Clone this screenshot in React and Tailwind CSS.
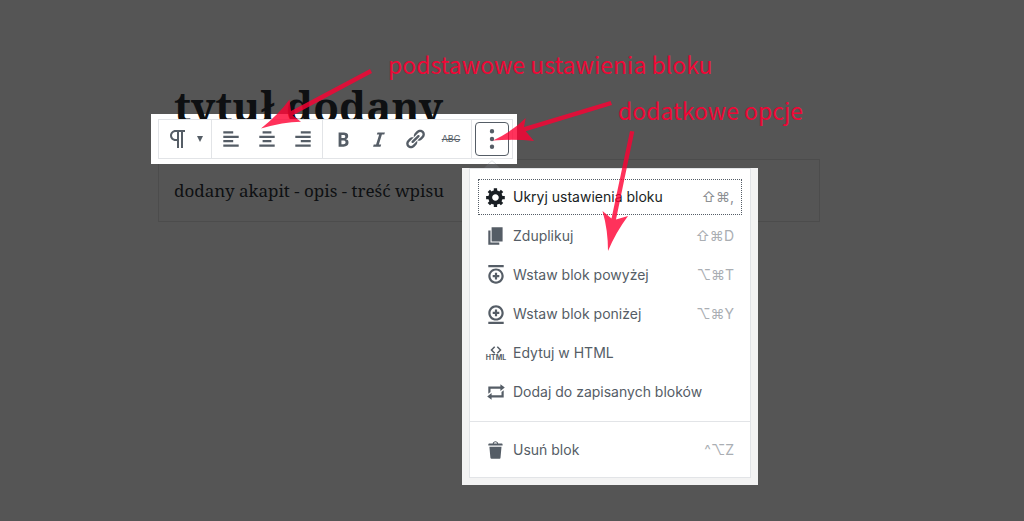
import React from 'react';

const icons = {
    paragraph: 'M11 5v7H9.5C7.6 12 6 10.4 6 8.5S7.6 5 9.5 5H11m8-2H9.5C6.5 3 4 5.5 4 8.5S6.5 14 9.5 14H11v7h2V5h2v16h2V5h2V3z',
    alignLeft: 'M12 5V3H3v2h9zm5 4V7H3v2h14zm-5 4v-2H3v2h9zm5 4v-2H3v2h14z',
    alignCenter: 'M14 5V3H6v2h8zm3 4V7H3v2h14zm-3 4v-2H6v2h8zm3 4v-2H3v2h14z',
    alignRight: 'M17 5V3H8v2h9zm0 4V7H3v2h14zm0 4v-2H8v2h9zm0 4v-2H3v2h14z',
    bold: 'M6 4v13h4.54c1.37 0 2.46-.33 3.26-1 .8-.66 1.2-1.58 1.2-2.77 0-.84-.17-1.51-.51-2.01s-.9-.85-1.67-1.03v-.09c.57-.1 1.02-.4 1.36-.9s.51-1.13.51-1.91c0-1.14-.39-1.98-1.17-2.5C12.75 4.26 11.5 4 9.78 4H6zm2.57 5.15V6.26h1.36c.73 0 1.27.11 1.61.32.34.22.51.58.51 1.07 0 .54-.16.92-.47 1.15s-.82.35-1.51.35h-1.5zm0 2.19h1.6c1.44 0 2.16.53 2.16 1.61 0 .6-.17 1.05-.51 1.34s-.86.43-1.57.43H8.57v-3.38z',
    italic: 'M14.78 6h-2.13l-2.8 9h2.12l-.62 2H4.6l.62-2h2.14l2.8-9H8.03l.62-2h6.75z',
    link: 'M17.74 2.76c1.68 1.69 1.68 4.41 0 6.1l-1.53 1.52c-1.12 1.12-2.7 1.47-4.14 1.09l2.62-2.61.76-.77.76-.76c.84-.84.84-2.2 0-3.04-.84-.85-2.2-.85-3.04 0l-.77.76-3.38 3.38c-.37-1.44-.02-3.02 1.1-4.14l1.52-1.53c1.69-1.68 4.42-1.68 6.1 0zM8.59 13.43l5.34-5.34c.42-.42.42-1.1 0-1.52-.44-.43-1.13-.39-1.53 0l-5.33 5.34c-.42.42-.42 1.1 0 1.52.44.43 1.13.39 1.52 0zm-.76 2.29l4.14-4.15c.38 1.44.03 3.02-1.09 4.14l-1.52 1.53c-1.69 1.68-4.41 1.68-6.1 0-1.68-1.68-1.68-4.42 0-6.1l1.53-1.52c1.12-1.12 2.7-1.47 4.14-1.1l-4.14 4.15c-.85.84-.85 2.2 0 3.05.84.84 2.2.84 3.04 0z',
    more: 'M10 .9a2 2 0 1 1 0 4 2 2 0 0 1 0-4zm0 7.1a2 2 0 1 1 0 4 2 2 0 0 1 0-4zm0 7.1a2 2 0 1 1 0 4 2 2 0 0 1 0-4z',
    settings: 'M18 12h-2.18c-.17.7-.44 1.35-.81 1.93l1.54 1.54-2.1 2.1-1.54-1.54c-.58.36-1.23.63-1.91.79V19H8v-2.18c-.68-.16-1.33-.43-1.91-.79l-1.54 1.54-2.12-2.12 1.54-1.54c-.36-.58-.63-1.23-.79-1.91H1V9.03h2.17c.16-.7.44-1.35.8-1.94L2.43 5.55l2.1-2.1 1.54 1.54c.58-.37 1.24-.64 1.93-.81V2h3v2.18c.68.16 1.33.43 1.91.79l1.54-1.54 2.12 2.12-1.54 1.54c.36.59.64 1.24.8 1.94H18V12zm-8.5 1.5c1.66 0 3-1.34 3-3s-1.34-3-3-3-3 1.34-3 3 1.34 3 3 3z',
    duplicate: 'M6 15V2h10v13H6zm-1 1h8v2H3V5h2v11z',
    insertBefore: 'M11 8H9v2H7v2h2v2h2v-2h2v-2h-2V8zm-1-4c-3.9 0-7 3.1-7 7s3.1 7 7 7 7-3.1 7-7-3.1-7-7-7zm0 12c-2.8 0-5-2.2-5-5s2.2-5 5-5 5 2.2 5 5-2.2 5-5 5zM3 1h14v2H3V1z',
    insertAfter: 'M9 12h2v-2h2V8h-2V6H9v2H7v2h2v2zm1 4c3.9 0 7-3.1 7-7s-3.1-7-7-7-7 3.1-7 7 3.1 7 7 7zm0-12c2.8 0 5 2.2 5 5s-2.2 5-5 5-5-2.2-5-5 2.2-5 5-5zM3 19h14v-2H3v2z',
    repeat: 'M5 7v3l-2 1.5V5h11V3l4 3.01L14 9V7H5zm10 6v-3l2-1.5V15H6v2l-4-3.01L6 11v2h9z',
    trash: 'M12 4h3c.6 0 1 .4 1 1v1H3V5c0-.6.5-1 1-1h3c.2-1.1 1.3-2 2.5-2s2.3.9 2.5 2zM8 4h3c-.2-.6-.9-1-1.5-1S8.2 3.4 8 4zM4 7h11l-.9 10.1c0 .5-.5.9-1 .9H5.9c-.5 0-.9-.4-1-.9L4 7z',
};

const Icon = ({ name, box = 20 }) => (
    <svg viewBox={`0 0 ${box} ${box}`} className="w-[22px] h-[22px] shrink-0 fill-current" aria-hidden="true">
        <path d={icons[name]} />
    </svg>
);

const HtmlIcon = () => (
    <span className="w-[22px] flex flex-col items-center shrink-0">
        <svg viewBox="0 0 12 8" className="w-3 h-2 fill-none stroke-current stroke-[1.5]" aria-hidden="true">
            <path d="M4.7 .8 1.5 4l3.2 3.2M7.3 .8 10.5 4 7.3 7.2" />
        </svg>
        <span className="text-[7px] leading-[7px] font-bold">HTML</span>
    </span>
);

const ToolButton = ({ label, children }) => (
    <button type="button" aria-label={label} className="w-9 h-[38px] flex items-center justify-center">
        {children}
    </button>
);

const Toolbar = () => (
    <div role="toolbar" className="relative z-20 flex bg-white border border-[#e2e4e7] text-[#555d66]">
        <button type="button" aria-label="Akapit" className="w-[52px] h-[38px] flex items-center justify-center gap-1.5">
            <svg viewBox="0 0 24 24" className="w-6 h-6 shrink-0 fill-current" aria-hidden="true">
                <path d={icons.paragraph} />
            </svg>
            <svg viewBox="0 0 8 6" className="w-2 h-1.5 fill-current" aria-hidden="true">
                <path d="M1 0h6L4 6z" />
            </svg>
        </button>
        <div className="flex px-px border-l border-[#e2e4e7]">
            <ToolButton label="Do lewej"><Icon name="alignLeft" /></ToolButton>
            <ToolButton label="Do środka"><Icon name="alignCenter" /></ToolButton>
            <ToolButton label="Do prawej"><Icon name="alignRight" /></ToolButton>
        </div>
        <div className="flex px-0.5 border-l border-[#e2e4e7]">
            <ToolButton label="Pogrubienie"><Icon name="bold" /></ToolButton>
            <ToolButton label="Kursywa"><Icon name="italic" /></ToolButton>
            <ToolButton label="Odnośnik"><Icon name="link" /></ToolButton>
            <ToolButton label="Przekreślenie">
                <span className="text-[9px] line-through">ABC</span>
            </ToolButton>
        </div>
        <div className="flex items-center px-[3px] border-l border-[#e2e4e7]">
            <button type="button" aria-label="Więcej opcji" className="w-[34px] h-[34px] flex items-center justify-center rounded border border-[#555d66]">
                <Icon name="more" />
            </button>
        </div>
    </div>
);

const menuItems = [
    { icon: 'settings', label: 'Ukryj ustawienia bloku', shortcut: '⇧⌘,', active: true },
    { icon: 'duplicate', label: 'Zduplikuj', shortcut: '⇧⌘D' },
    { icon: 'insertBefore', label: 'Wstaw blok powyżej', shortcut: '⌥⌘T' },
    { icon: 'insertAfter', label: 'Wstaw blok poniżej', shortcut: '⌥⌘Y' },
    { icon: 'html', label: 'Edytuj w HTML' },
    { icon: 'repeat', label: 'Dodaj do zapisanych bloków' },
];

const MenuItem = ({ icon, label, shortcut, active }) => (
    <button
        type="button"
        role="menuitem"
        className={`h-9 pl-1.5 pr-[7px] flex items-center gap-1.5 border border-dotted ${active ? 'border-[#555d66] text-[#191e23]' : 'border-transparent text-[#555d66]'}`}
    >
        {icon === 'html' ? <HtmlIcon /> : <Icon name={icon} />}
        <span>{label}</span>
        {shortcut && <span className={`ml-auto ${active ? 'text-[#8c8f93]' : 'text-[#aaaeb3]'}`}>{shortcut}</span>}
    </button>
);

const BlockMenu = () => (
    <div role="menu" className="relative z-20 bg-white border border-[#e2e4e7] text-sm">
        <div className="flex flex-col gap-[3px] px-2 pt-2.5 pb-[11px]">
            {menuItems.map((item) => <MenuItem key={item.label} {...item} />)}
        </div>
        <div className="flex flex-col px-2 pt-2.5 pb-[9px] border-t border-[#e2e4e7]">
            <MenuItem icon="trash" label="Usuń blok" shortcut="^⌥Z" />
        </div>
    </div>
);

// arrows drawn over the editor, in page coordinates
const Arrows = () => (
    <svg className="absolute left-0 top-0 z-30 w-[1024px] h-[521px] pointer-events-none fill-[#ff0033] opacity-80" aria-hidden="true">
        <path d="M370 69 291 111 289.500 99.500Q279 114 261 128.500Q283 122 301 121.700L292.500 115.500 372 73z" />
        <path d="M610.500 101 524 127 525.700 118Q513 131 493 140.500Q515 139 534 141L525.700 131.300 612 105z" />
        <path d="M630 131 611.500 218.500 602.500 211Q608 230 608 251Q616 232 628 216L616 219.500 634.300 131.500z" />
    </svg>
);

const App = () => (
    <div className="relative min-h-screen overflow-hidden bg-[#555] pl-[158px] pr-[204px] pt-[78px] font-['Inter',sans-serif]">
        <h1 className="relative z-10 pl-4 text-[42px] leading-[56px] font-bold text-[#0e1012] font-['Noto_Serif','DejaVu_Serif',serif]">
            tytuł dodany
        </h1>
        <section className="relative mt-[25px]">
            <div className="absolute -left-[7px] -top-[45px] bg-white pl-[7px] pr-1 pt-[5px] pb-[5px]">
                <Toolbar />
            </div>
            <div className="absolute left-[304px] top-[9px] w-[296px] bg-[#f3f3f3] px-[7px] pb-[7px]">
                <svg viewBox="0 0 18 9" className="absolute left-[21px] -top-2 z-30 w-[18px] h-[9px] fill-white stroke-[#e2e4e7]" aria-hidden="true">
                    <path d="M5 4 9 .7 13 4" />
                    <path className="fill-[#606163] stroke-none" d="M5 4 13 4 17 8H1z" />
                </svg>
                <BlockMenu />
            </div>
            <div className="border border-black/10 px-[15px] py-4">
                <p className="text-[17px] leading-[29px] text-[#0e1012] font-['Noto_Serif','DejaVu_Serif',serif]">
                    dodany akapit - opis - treść wpisu
                </p>
            </div>
        </section>
        <p className="absolute left-[388px] top-[45px] z-30 text-[23px] leading-[38px] text-[#ff0033] opacity-90 font-['Noto_Sans_CJK_SC',sans-serif]">
            podstawowe ustawienia bloku
        </p>
        <p className="absolute left-[618px] top-[91px] z-30 text-[23px] leading-[38px] text-[#ff0033] opacity-90 font-['Noto_Sans_CJK_SC',sans-serif]">
            dodatkowe opcje
        </p>
        <Arrows />
    </div>
);

export default App;
